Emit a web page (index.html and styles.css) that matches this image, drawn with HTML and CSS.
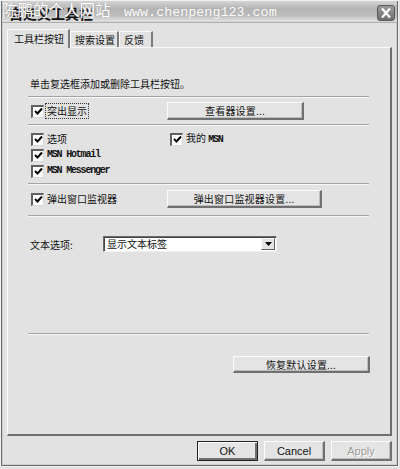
FILE: index.html
```html
<!DOCTYPE html>
<html lang="zh">
<head>
<meta charset="utf-8">
<title>自定义工具栏</title>
<link rel="stylesheet" href="styles.css">
</head>
<body>
<div class="window">
  <div class="titlebar">
    <span class="title">自定义工具栏</span>
    <span class="close"><svg width="18" height="16" viewBox="0 0 18 16"><path d="M5 3.5 L13 12.5 M13 3.5 L5 12.5" stroke="#fff" stroke-width="2.2" fill="none"/></svg></span>
    <span class="watermark">陈鹏的个人网站 <span class="url">www.chenpeng123.com</span></span>
  </div>
  <div class="tabs">
    <div class="tab active">工具栏按钮</div>
    <div class="tab">搜索设置</div>
    <div class="tab">反馈</div>
  </div>
  <div class="panel">
    <p class="intro">单击复选框添加或删除工具栏按钮。</p>
    <div class="sep s1"></div>
    <div class="grid row-btn r1">
      <label class="check"><span class="box"><svg width="9" height="9" viewBox="0 0 9 9"><path d="M1 4 L3.5 6.5 L8 1.5" stroke="#000" stroke-width="2" fill="none"/></svg></span><span class="lbl focus">突出显示</span></label>
      <span class="btn b-view">查看器设置...</span>
    </div>
    <div class="sep s2"></div>
    <div class="grid checks">
      <label class="check"><span class="box"><svg width="9" height="9" viewBox="0 0 9 9"><path d="M1 4 L3.5 6.5 L8 1.5" stroke="#000" stroke-width="2" fill="none"/></svg></span><span class="lbl">选项</span></label>
      <label class="check"><span class="box"><svg width="9" height="9" viewBox="0 0 9 9"><path d="M1 4 L3.5 6.5 L8 1.5" stroke="#000" stroke-width="2" fill="none"/></svg></span><span class="lbl">我的 <span class="mono">MSN</span></span></label>
      <label class="check"><span class="box"><svg width="9" height="9" viewBox="0 0 9 9"><path d="M1 4 L3.5 6.5 L8 1.5" stroke="#000" stroke-width="2" fill="none"/></svg></span><span class="lbl mono">MSN Hotmail</span></label>
      <span></span>
      <label class="check"><span class="box"><svg width="9" height="9" viewBox="0 0 9 9"><path d="M1 4 L3.5 6.5 L8 1.5" stroke="#000" stroke-width="2" fill="none"/></svg></span><span class="lbl mono">MSN Messenger</span></label>
      <span></span>
    </div>
    <div class="sep s3"></div>
    <div class="grid row-btn r4">
      <label class="check"><span class="box"><svg width="9" height="9" viewBox="0 0 9 9"><path d="M1 4 L3.5 6.5 L8 1.5" stroke="#000" stroke-width="2" fill="none"/></svg></span><span class="lbl">弹出窗口监视器</span></label>
      <span class="btn b-popup">弹出窗口监视器设置...</span>
    </div>
    <div class="sep s4"></div>
    <div class="select-row">
      <span class="sel-label">文本选项:</span>
      <span class="select"><span class="sel-text">显示文本标签</span><span class="drop"><svg width="7" height="4" viewBox="0 0 7 4"><path d="M0 0 H7 L3.5 4 Z" fill="#000"/></svg></span></span>
    </div>
    <div class="sep s5"></div>
    <div class="restore-row">
      <span class="btn b-restore">恢复默认设置...</span>
    </div>
  </div>
  <div class="footer">
    <span class="btn fbtn default">OK</span>
    <span class="btn fbtn">Cancel</span>
    <span class="btn fbtn disabled">Apply</span>
  </div>
</div>
</body>
</html>
```

FILE: styles.css
```css
* { box-sizing: border-box; }
html, body {
  margin: 0;
  padding: 0;
  background: #e3e3e3;
  width: 400px;
  height: 469px;
  overflow: hidden;
}
body {
  font-family: "Noto Sans CJK SC", "DejaVu Sans", sans-serif;
  font-size: 10px;
  color: #111;
}
.window {
  width: 399px;
  height: 467px;
  border: 1px solid #f2f2f2;
  box-shadow: inset 0 0 0 1px #6a6a6a, inset 0 0 0 2px #cfcfcf;
  background: #e2e2e2;
  display: flex;
  flex-direction: column;
}
.titlebar {
  position: relative;
  height: 22px;
  margin: 0 1px;
  background: linear-gradient(#d4d4d4 0%, #b4b4b4 35%, #bcbcbc 65%, #e2e2e2 92%, #9a9a9a 100%);
  flex: none;
}
.title {
  position: absolute;
  left: 7px;
  top: 3px;
  font-size: 14px;
  font-weight: bold;
  line-height: 18px;
  color: #111;
}
.watermark {
  position: absolute;
  left: 0;
  top: 0;
  font-size: 15.5px;
  line-height: 16px;
  color: #fff;
  text-shadow: 0 0 1px #999;
  white-space: nowrap;
}
.watermark .url {
  font-family: "Liberation Mono", "DejaVu Sans Mono", monospace;
  font-size: 13.4px;
  margin-left: 10px;
}
.close {
  position: absolute;
  right: 2px;
  top: 4px;
  width: 18px;
  height: 16px;
  border-radius: 3px;
  background: linear-gradient(#9a9a9a, #707070);
  border: 1px solid #5a5a5a;
  display: flex;
  align-items: center;
  justify-content: center;
}
.close svg { display: block; margin: -1px; }
.tabs {
  display: flex;
  align-items: flex-end;
  margin-top: 6px;
  padding-left: 6px;
  height: 18px;
  flex: none;
  position: relative;
  z-index: 1;
}
.tab {
  height: 16px;
  line-height: 15px;
  padding: 0 0 0 4px;
  border-top: 1px solid #fafafa;
  border-left: 1px solid #fafafa;
  border-right: 2px solid #7a7a7a;
  background: #e2e2e2;
  white-space: nowrap;
  font-size: 10px;
}
.tab.active {
  height: 19px;
  line-height: 17px;
  padding: 0 0 0 6px;
  margin-bottom: -1px;
  width: 63px;
}
.tab:nth-child(2) { width: 49px; }
.tab:nth-child(3) { width: 34px; }
.panel {
  flex: none;
  height: 389px;
  margin: 0 6px 0 6px;
  border-top: 1px solid #fafafa;
  border-left: 1px solid #fafafa;
  border-right: 2px solid #6f6f6f;
  border-bottom: 2px solid #6f6f6f;
  padding: 0 21px 0 20px;
  display: flex;
  flex-direction: column;
}
.intro {
  margin: 29px 0 0 2px;
  line-height: 14px;
  height: 14px;
}
.sep {
  height: 2px;
  border-top: 1px solid #a4a4a4;
  border-bottom: 1px solid #f8f8f8;
  flex: none;
}
.s1 { margin-top: 5px; }
.s2 { margin-top: 4px; }
.s3 { margin-top: 4px; }
.s4 { margin-top: 7px; }
.s5 { margin-top: 81px; }
.grid {
  display: grid;
  grid-template-columns: 139px 1fr;
  align-items: center;
}
.r1 { margin-top: 4px; height: 18px; }
.r4 { margin-top: 5px; height: 18px; }
.checks {
  margin-top: 5px;
  grid-auto-rows: 16px;
}
.check {
  display: flex;
  align-items: center;
  margin-left: 3px;
  height: 16px;
  white-space: nowrap;
}
.box {
  width: 13px;
  height: 13px;
  background: #fff;
  border-top: 2px solid #606060;
  border-left: 2px solid #606060;
  border-right: 1px solid #d8d8d8;
  border-bottom: 1px solid #d8d8d8;
  display: flex;
  align-items: center;
  justify-content: center;
  flex: none;
}
.box svg { display: block; }
.lbl {
  margin-left: 2px;
  line-height: 14px;
  padding: 0 1px;
}
.focus {
  outline: 1px dotted #333;
  outline-offset: 0;
}
.mono {
  font-family: "Liberation Mono", "DejaVu Sans Mono", monospace;
  font-size: 10px;
  font-weight: bold;
  letter-spacing: -1.2px;
}
.btn {
  display: flex;
  align-items: center;
  justify-content: center;
  background: #e4e4e4;
  border-top: 1px solid #fbfbfb;
  border-left: 1px solid #fbfbfb;
  border-right: 2px solid #707070;
  border-bottom: 2px solid #707070;
  box-shadow: inset -1px -1px 0 #bdbdbd;
  white-space: nowrap;
  font-size: 10px;
  letter-spacing: 0.2px;
}
.b-view { width: 137px; height: 18px; }
.b-popup { width: 155px; height: 18px; }
.select-row {
  margin-top: 19px;
  display: flex;
  align-items: center;
  height: 16px;
}
.sel-label {
  width: 75px;
  padding-left: 2px;
  flex: none;
}
.select {
  width: 174px;
  height: 16px;
  background: #fff;
  border-top: 1px solid #6a6a6a;
  border-left: 1px solid #6a6a6a;
  border-right: 1px solid #f0f0f0;
  border-bottom: 1px solid #f0f0f0;
  box-shadow: inset 1px 1px 0 #444;
  display: flex;
  align-items: center;
  justify-content: space-between;
}
.sel-text {
  padding-left: 3px;
  line-height: 14px;
}
.drop {
  width: 14px;
  height: 12px;
  margin-right: 1px;
  background: #e4e4e4;
  border-top: 1px solid #fafafa;
  border-left: 1px solid #fafafa;
  border-right: 1px solid #606060;
  border-bottom: 1px solid #606060;
  display: flex;
  align-items: center;
  justify-content: center;
}
.drop svg { display: block; }
.restore-row {
  margin-top: 21px;
  display: flex;
  justify-content: flex-end;
  margin-right: -1px;
}
.b-restore { width: 137px; height: 17px; }
.footer {
  display: flex;
  justify-content: flex-end;
  gap: 6px;
  margin-top: 5px;
  padding-right: 6px;
}
.fbtn {
  width: 61px;
  height: 20px;
  font-family: "Liberation Sans", "DejaVu Sans", sans-serif;
  font-size: 11px;
  letter-spacing: 0;
}
.fbtn.default {
  border: 1px solid #222;
  box-shadow: inset 1px 1px 0 #fbfbfb, inset -2px -2px 0 #707070;
}
.fbtn.disabled {
  color: #9a9a9a;
  text-shadow: 1px 1px 0 #fff;
}
```
